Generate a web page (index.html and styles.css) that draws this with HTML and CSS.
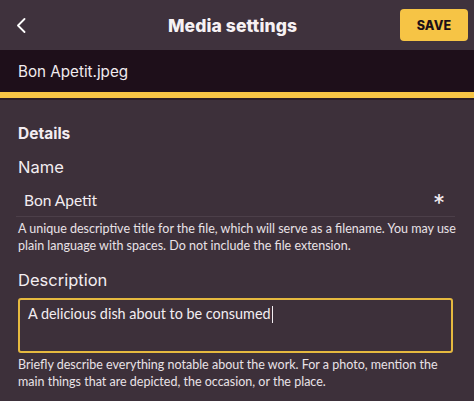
FILE: index.html
```html
<!DOCTYPE html>
<html lang="en">
<head>
<meta charset="utf-8">
<title>Media settings</title>
<link rel="stylesheet" href="styles.css">
</head>
<body>
<div class="app">
  <header class="topbar">
    <button class="back" aria-label="Back">
      <svg width="10" height="15" viewBox="0 0 10 15"><path d="M8.5 1 L2 7.5 L8.5 14" fill="none" stroke="#ffffff" stroke-width="1.8" stroke-linecap="round" stroke-linejoin="round"/></svg>
    </button>
    <h1 class="title">Media settings</h1>
    <button class="save">SAVE</button>
  </header>
  <div class="filebar">Bon Apetit.jpeg</div>
  <div class="accent"></div>
  <main class="content">
    <h2 class="section">Details</h2>
    <div class="field">
      <label class="label">Name</label>
      <div class="input-row">
        <span class="value">Bon Apetit</span>
        <span class="req">*</span>
      </div>
      <p class="help">A unique descriptive title for the file, which will serve as a filename. You may use plain language with spaces. Do not include the file extension.</p>
    </div>
    <div class="field">
      <label class="label">Description</label>
      <div class="textarea"><span>A delicious dish about to be consumed</span><span class="caret"></span></div>
      <p class="help">Briefly describe everything notable about the work. For a photo, mention the main things that are depicted, the occasion, or the place.</p>
    </div>
  </main>
</div>
</body>
</html>
```
FILE: styles.css
```css
* { box-sizing: border-box; }
html, body { margin: 0; padding: 0; }
body {
  background: #3d303a;
  font-family: Inter, "Noto Sans", sans-serif;
  color: #f3edf1;
  width: 474px;
  height: 401px;
  overflow: hidden;
}
.topbar {
  height: 50px;
  background: #3f323d;
  display: flex;
  align-items: center;
  padding: 0 6px 0 11px;
}
.back {
  width: 20px;
  height: 24px;
  background: none;
  border: 0;
  padding: 0;
  display: flex;
  align-items: center;
  justify-content: center;
}
.title {
  flex: 1;
  margin: 0;
  text-align: center;
  font-size: 17.5px;
  font-weight: 800;
  color: #f6f1f4;
  padding-left: 34px;
  letter-spacing: 0.1px;
}
.save {
  width: 68px;
  height: 32px;
  background: #f6c445;
  border: 0;
  border-radius: 4px;
  font-family: Inter, sans-serif;
  font-weight: 800;
  font-size: 12.5px;
  color: #1c0f18;
  letter-spacing: 0.2px;
}
.filebar {
  height: 42px;
  background: #1e0f1a;
  display: flex;
  align-items: center;
  padding-left: 18px;
  font-size: 15.2px;
  color: #f1ebef;
}
.accent {
  height: 8px;
  background: #f6c445;
  border-bottom: 2px solid #2a1d27;
}
.content {
  padding: 24px 18px 0 18px;
}
.section {
  margin: 0 0 12px 0;
  font-size: 15.5px;
  font-weight: 700;
  line-height: 20px;
}
.label {
  display: block;
  font-size: 16.5px;
  line-height: 22px;
}
.input-row {
  margin-top: 5px;
  display: flex;
  align-items: center;
  justify-content: space-between;
  height: 34px;
  padding: 0 10px 0 8px;
  border-bottom: 1px solid #4c3f49;
  margin-left: -2px;
  margin-right: 1px;
}
.value { font-family: Lato, Inter, sans-serif; font-size: 15.5px; }
.req { font-size: 24px; line-height: 1; padding-top: 8px; }
.help {
  margin: 3px 0 0 0;
  font-family: Lato, Inter, sans-serif;
  font-size: 12.5px;
  line-height: 17px;
  color: #e9e2e7;
}
.field + .field { margin-top: 15px; }
.textarea {
  margin-top: 7px;
  height: 55px;
  border: 2px solid #e6b93f;
  border-radius: 3px;
  padding: 5px 8px;
  font-family: Lato, Inter, sans-serif;
  font-size: 14.4px;
  line-height: 18px;
  display: flex;
  align-items: flex-start;
  margin-right: 3px;
}
.caret {
  display: inline-block;
  width: 1px;
  height: 17px;
  background: #f3edf1;
  margin-left: 1px;
  margin-top: 1px;
}
.textarea + .help { margin-top: 3px; }
```
